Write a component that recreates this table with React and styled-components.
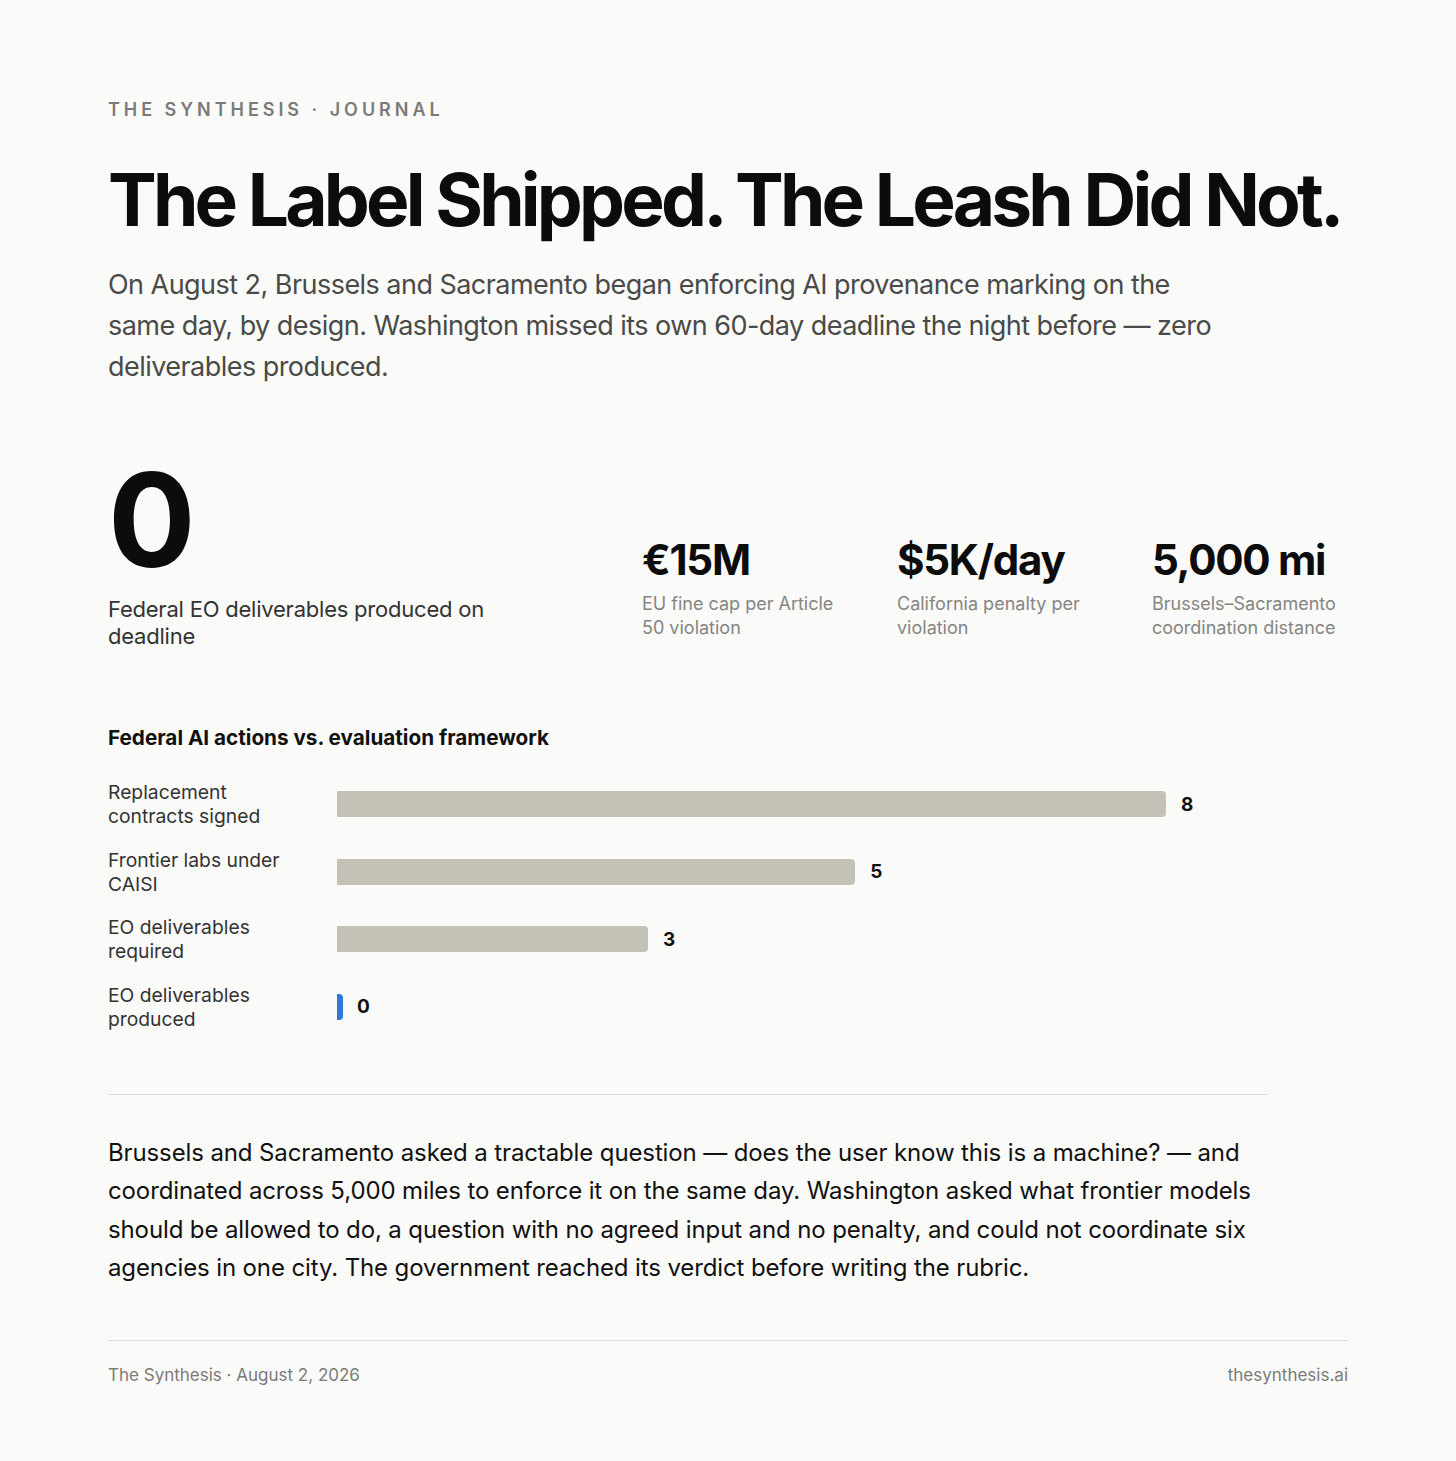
import styled, { createGlobalStyle } from 'styled-components'

const GlobalStyle = createGlobalStyle`
  * { box-sizing: border-box; }
  body {
    margin: 0;
    background: #fafaf8;
    font-family: Inter, "Noto Sans", "Liberation Sans", sans-serif;
    color: #111;
  }
`

const Page = styled.div`
  width: 1456px;
  min-height: 1461px;
  padding: 99px 108px 60px;
  background: #fafaf8;
`

const Eyebrow = styled.div`
  font-size: 18px;
  line-height: 22px;
  font-weight: 600;
  letter-spacing: 0.22em;
  color: #7a7a78;
  text-transform: uppercase;
`

const Title = styled.h1`
  margin: 36px 0 0;
  font-size: 73px;
  line-height: 86px;
  font-weight: 700;
  letter-spacing: -0.052em;
  white-space: nowrap;
  color: #0c0c0c;
`

const Dek = styled.p`
  margin: 21px 0 0;
  max-width: 1115px;
  font-size: 27px;
  line-height: 41px;
  color: #4a4a48;
  letter-spacing: -0.02em;
`

const Stats = styled.section`
  margin-top: 69px;
  display: grid;
  grid-template-columns: 1fr repeat(3, 196px);
  column-gap: 59px;
  align-items: end;
`

const Hero = styled.div`
  display: flex;
  flex-direction: column;
`

const HeroValue = styled.div`
  font-size: 130px;
  line-height: 128px;
  font-weight: 700;
  letter-spacing: -0.04em;
  color: #0c0c0c;
`

const HeroLabel = styled.div`
  margin-top: 12px;
  max-width: 400px;
  font-size: 22px;
  line-height: 27px;
  letter-spacing: -0.01em;
  color: #333;
`

const Stat = styled.div`
  display: flex;
  flex-direction: column;
  padding-bottom: 10px;
`

const StatValue = styled.div`
  font-size: 42px;
  line-height: 48px;
  font-weight: 700;
  letter-spacing: -0.03em;
  color: #0c0c0c;
  white-space: nowrap;
`

const StatLabel = styled.div`
  margin-top: 8px;
  font-size: 18px;
  line-height: 24px;
  color: #858583;
`

const Chart = styled.section`
  margin-top: 76px;
  max-width: 1160px;
`

const ChartTitle = styled.h2`
  margin: 0;
  font-size: 20.7px;
  line-height: 24px;
  font-weight: 700;
  color: #111;
`

const Rows = styled.div`
  margin-top: 30px;
  display: flex;
  flex-direction: column;
  gap: 19.5px;
`

const Row = styled.div`
  display: grid;
  grid-template-columns: 229px 1fr;
  align-items: center;
`

const RowLabel = styled.div`
  font-size: 19.3px;
  line-height: 24px;
  color: #333;
  padding-right: 40px;
`

const Track = styled.div`
  display: flex;
  align-items: center;
`

const Bar = styled.div`
  height: 26px;
  border-radius: 0 4px 4px 0;
  background: ${({ $accent }) => ($accent ? '#2f78d6' : '#c4c2b6')};
`

const BarValue = styled.span`
  margin-left: ${({ $accent }) => ($accent ? '14px' : '15px')};
  font-size: 19px;
  font-weight: 700;
  color: #111;
`

const Divider = styled.hr`
  margin: 63px 0 0;
  max-width: 1160px;
  border: none;
  border-top: 1px solid #dcdcd8;
`

const Body = styled.p`
  margin: 39px 0 0;
  max-width: 1160px;
  font-size: 24px;
  line-height: 38.5px;
  color: #111;
  letter-spacing: -0.005em;
`

const Footer = styled.footer`
  margin-top: 52px;
  padding-top: 23px;
  border-top: 1px solid #dcdcd8;
  display: flex;
  justify-content: space-between;
  font-size: 17px;
  line-height: 22px;
  color: #7a7a78;
`

const stats = [
  { value: '€15M', label: 'EU fine cap per Article 50 violation' },
  { value: '$5K/day', label: 'California penalty per violation' },
  { value: '5,000 mi', label: 'Brussels–Sacramento coordination distance' },
]

const rows = [
  { label: 'Replacement contracts signed', value: 8 },
  { label: 'Frontier labs under CAISI', value: 5 },
  { label: 'EO deliverables required', value: 3 },
  { label: 'EO deliverables produced', value: 0, accent: true },
]

const MAX_BAR = 829
const MAX_VALUE = 8

const App = () => {
  return (
    <>
      <GlobalStyle />
      <Page>
        <Eyebrow>The Synthesis · Journal</Eyebrow>
        <Title>The Label Shipped. The Leash Did Not.</Title>
        <Dek>
          On August 2, Brussels and Sacramento began enforcing AI provenance marking on the
          same day, by design. Washington missed its own 60-day deadline the night before — zero
          deliverables produced.
        </Dek>

        <Stats>
          <Hero>
            <HeroValue>0</HeroValue>
            <HeroLabel>Federal EO deliverables produced on deadline</HeroLabel>
          </Hero>
          {stats.map((s) => (
            <Stat key={s.value}>
              <StatValue>{s.value}</StatValue>
              <StatLabel>{s.label}</StatLabel>
            </Stat>
          ))}
        </Stats>

        <Chart>
          <ChartTitle>Federal AI actions vs. evaluation framework</ChartTitle>
          <Rows>
            {rows.map((r) => (
              <Row key={r.label}>
                <RowLabel>{r.label}</RowLabel>
                <Track>
                  <Bar
                    $accent={r.accent}
                    style={{ width: r.value ? (r.value / MAX_VALUE) * MAX_BAR : 6 }}
                  />
                  <BarValue $accent={r.accent}>{r.value}</BarValue>
                </Track>
              </Row>
            ))}
          </Rows>
        </Chart>

        <Divider />

        <Body>
          Brussels and Sacramento asked a tractable question — does the user know this is a
          machine? — and coordinated across 5,000 miles to enforce it on the same day. Washington
          asked what frontier models should be allowed to do, a question with no agreed input and
          no penalty, and could not coordinate six agencies in one city. The government reached
          its verdict before writing the rubric.
        </Body>

        <Footer>
          <span>The Synthesis · August 2, 2026</span>
          <span>thesynthesis.ai</span>
        </Footer>
      </Page>
    </>
  )
}

export default App
